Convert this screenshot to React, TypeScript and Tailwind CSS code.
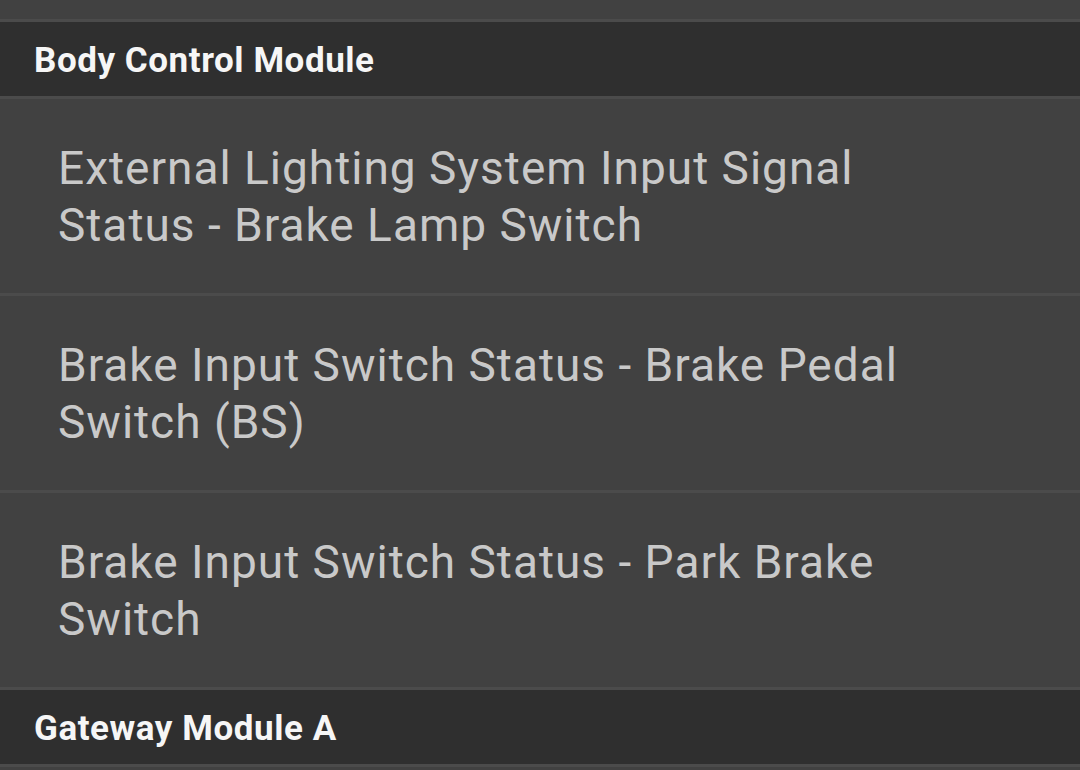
const sections = [
  {
    title: "Body Control Module",
    items: [
      "External Lighting System Input Signal Status - Brake Lamp Switch",
      "Brake Input Switch Status - Brake Pedal Switch (BS)",
      "Brake Input Switch Status - Park Brake Switch",
    ],
  },
  { title: "Gateway Module A", items: [] },
];

export default function App() {
  return (
    <div
      className="h-[770px] w-[1080px] overflow-hidden bg-[#414141]"
      style={{ fontFamily: "Roboto, 'Noto Sans', sans-serif" }}
    >
      <div className="h-[22px] border-b-[3px] border-[#4b4b4b] bg-[#414141]" />
      {sections.map((section) => (
        <div key={section.title}>
          <div className="flex h-[77px] items-center border-b-[3px] border-[#4b4b4b] bg-[#2f2f2f] px-[34px] pt-[4px]">
            <h2 className="text-[35px] font-bold tracking-[0.55px] text-[#f6f6f6]">{section.title}</h2>
          </div>
          {section.items.map((item) => (
            <div
              key={item}
              className="flex h-[197px] items-center border-b-[3px] border-[#4b4b4b] bg-[#414141] pl-[58px] pr-[150px] pt-[2px]"
            >
              <p className="text-[46px] leading-[57px] tracking-[1px] text-[#c9c9c9]">{item}</p>
            </div>
          ))}
        </div>
      ))}
    </div>
  );
}
